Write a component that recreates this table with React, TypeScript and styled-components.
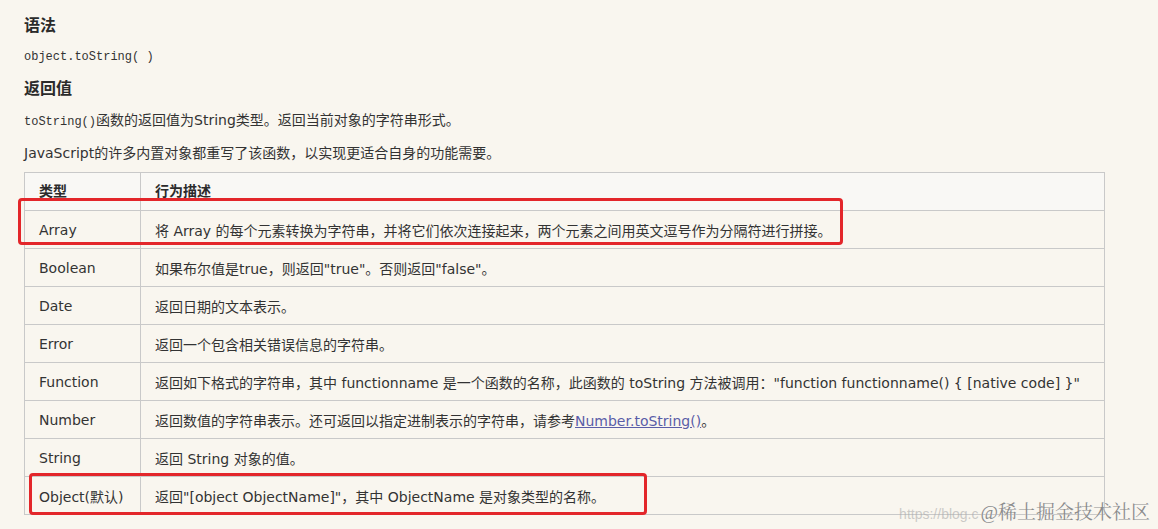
import React from "react";
import styled, { createGlobalStyle } from "styled-components";

const GlobalStyle = createGlobalStyle`
  html, body {
    margin: 0;
    padding: 0;
    background: #f9f6ef;
  }
  body {
    font-family: "DejaVu Sans", "Noto Sans CJK SC", sans-serif;
    color: #333;
  }
`;

const Page = styled.div`
  position: relative;
  width: 1158px;
  height: 529px;
  padding: 12px 0 0 24px;
  box-sizing: border-box;
  overflow: hidden;
`;

const Heading = styled.h3<{ $top?: number }>`
  margin: ${(p) => p.$top ?? 0}px 0 0;
  font-size: 16px;
  line-height: 24px;
  font-weight: bold;
  color: #2b2b2b;
  font-family: "Noto Sans CJK SC", sans-serif;
`;

const Para = styled.p<{ $top: number }>`
  margin: ${(p) => p.$top}px 0 0;
  font-size: 14px;
  line-height: 20px;
  color: #333;
`;

const Code = styled.code`
  font-family: "Liberation Mono", "Noto Sans CJK SC", monospace;
  font-size: 12px;
  color: #333;
`;

const TableWrap = styled.div`
  position: relative;
  margin-top: 9px;
  width: 1081px;
`;

const Table = styled.table`
  width: 100%;
  border-collapse: collapse;
  font-size: 14px;
  table-layout: fixed;
`;

const HeadCell = styled.th<{ $w?: number }>`
  width: ${(p) => (p.$w ? `${p.$w}px` : "auto")};
  height: 38px;
  padding: 0 14px 3px;
  box-sizing: border-box;
  text-align: left;
  font-weight: bold;
  color: #2b2b2b;
  background: #f9f8f5;
  border: 1px solid #c9c9c9;
  font-family: "Noto Sans CJK SC", sans-serif;
  vertical-align: middle;
`;

const Cell = styled.td`
  height: 38px;
  padding: 0 14px;
  box-sizing: border-box;
  border: 1px solid #c9c9c9;
  color: #333;
  white-space: nowrap;
  vertical-align: middle;
`;

const Link = styled.a`
  color: #5a5da8;
  text-decoration: underline;
`;

const Highlight = styled.div<{ $left: number; $top: number; $w: number; $h: number }>`
  position: absolute;
  left: ${(p) => p.$left}px;
  top: ${(p) => p.$top}px;
  width: ${(p) => p.$w}px;
  height: ${(p) => p.$h}px;
  border: 3px solid #e3262a;
  border-radius: 4px;
  box-sizing: border-box;
  pointer-events: none;
`;

const Watermark = styled.div`
  position: absolute;
  right: 8px;
  bottom: 5px;
  display: flex;
  align-items: baseline;
  gap: 2px;
`;

const WatermarkUrl = styled.span`
  font-family: "Liberation Sans", sans-serif;
  font-size: 14px;
  color: rgba(170, 170, 170, 0.6);
`;

const WatermarkName = styled.span`
  font-family: "Liberation Serif", "Noto Serif CJK SC", "Noto Sans CJK SC", serif;
  font-size: 19px;
  color: #8c8c8c;
  text-shadow: 0 0 1px #fff;
`;

const rows: { type: string; desc: React.ReactNode }[] = [
  {
    type: "Array",
    desc: "将 Array 的每个元素转换为字符串，并将它们依次连接起来，两个元素之间用英文逗号作为分隔符进行拼接。",
  },
  { type: "Boolean", desc: "如果布尔值是true，则返回\"true\"。否则返回\"false\"。" },
  { type: "Date", desc: "返回日期的文本表示。" },
  { type: "Error", desc: "返回一个包含相关错误信息的字符串。" },
  {
    type: "Function",
    desc: "返回如下格式的字符串，其中 functionname 是一个函数的名称，此函数的 toString 方法被调用：\"function functionname() { [native code] }\"",
  },
  {
    type: "Number",
    desc: (
      <>
        返回数值的字符串表示。还可返回以指定进制表示的字符串，请参考
        <Link>Number.toString()</Link>。
      </>
    ),
  },
  { type: "String", desc: "返回 String 对象的值。" },
  { type: "Object(默认)", desc: "返回\"[object ObjectName]\"，其中 ObjectName 是对象类型的名称。" },
];

export default function App() {
  return (
    <Page>
      <GlobalStyle />
      <Heading>语法</Heading>
      <Para $top={9}>
        <Code>object.toString( )</Code>
      </Para>
      <Heading $top={8}>返回值</Heading>
      <Para $top={11}>
        <Code>toString()</Code>函数的返回值为String类型。返回当前对象的字符串形式。
      </Para>
      <Para $top={11}>JavaScript的许多内置对象都重写了该函数，以实现更适合自身的功能需要。</Para>

      <TableWrap>
        <Table>
          <thead>
            <tr>
              <HeadCell $w={116}>类型</HeadCell>
              <HeadCell>行为描述</HeadCell>
            </tr>
          </thead>
          <tbody>
            {rows.map((r) => (
              <tr key={r.type}>
                <Cell>{r.type}</Cell>
                <Cell>{r.desc}</Cell>
              </tr>
            ))}
          </tbody>
        </Table>
        <Highlight $left={-6} $top={26} $w={825} $h={47} />
        <Highlight $left={5} $top={301} $w={618} $h={42} />
      </TableWrap>

      <Watermark>
        <WatermarkUrl>https://blog.c</WatermarkUrl>
        <WatermarkName>@稀土掘金技术社区</WatermarkName>
      </Watermark>
    </Page>
  );
}
